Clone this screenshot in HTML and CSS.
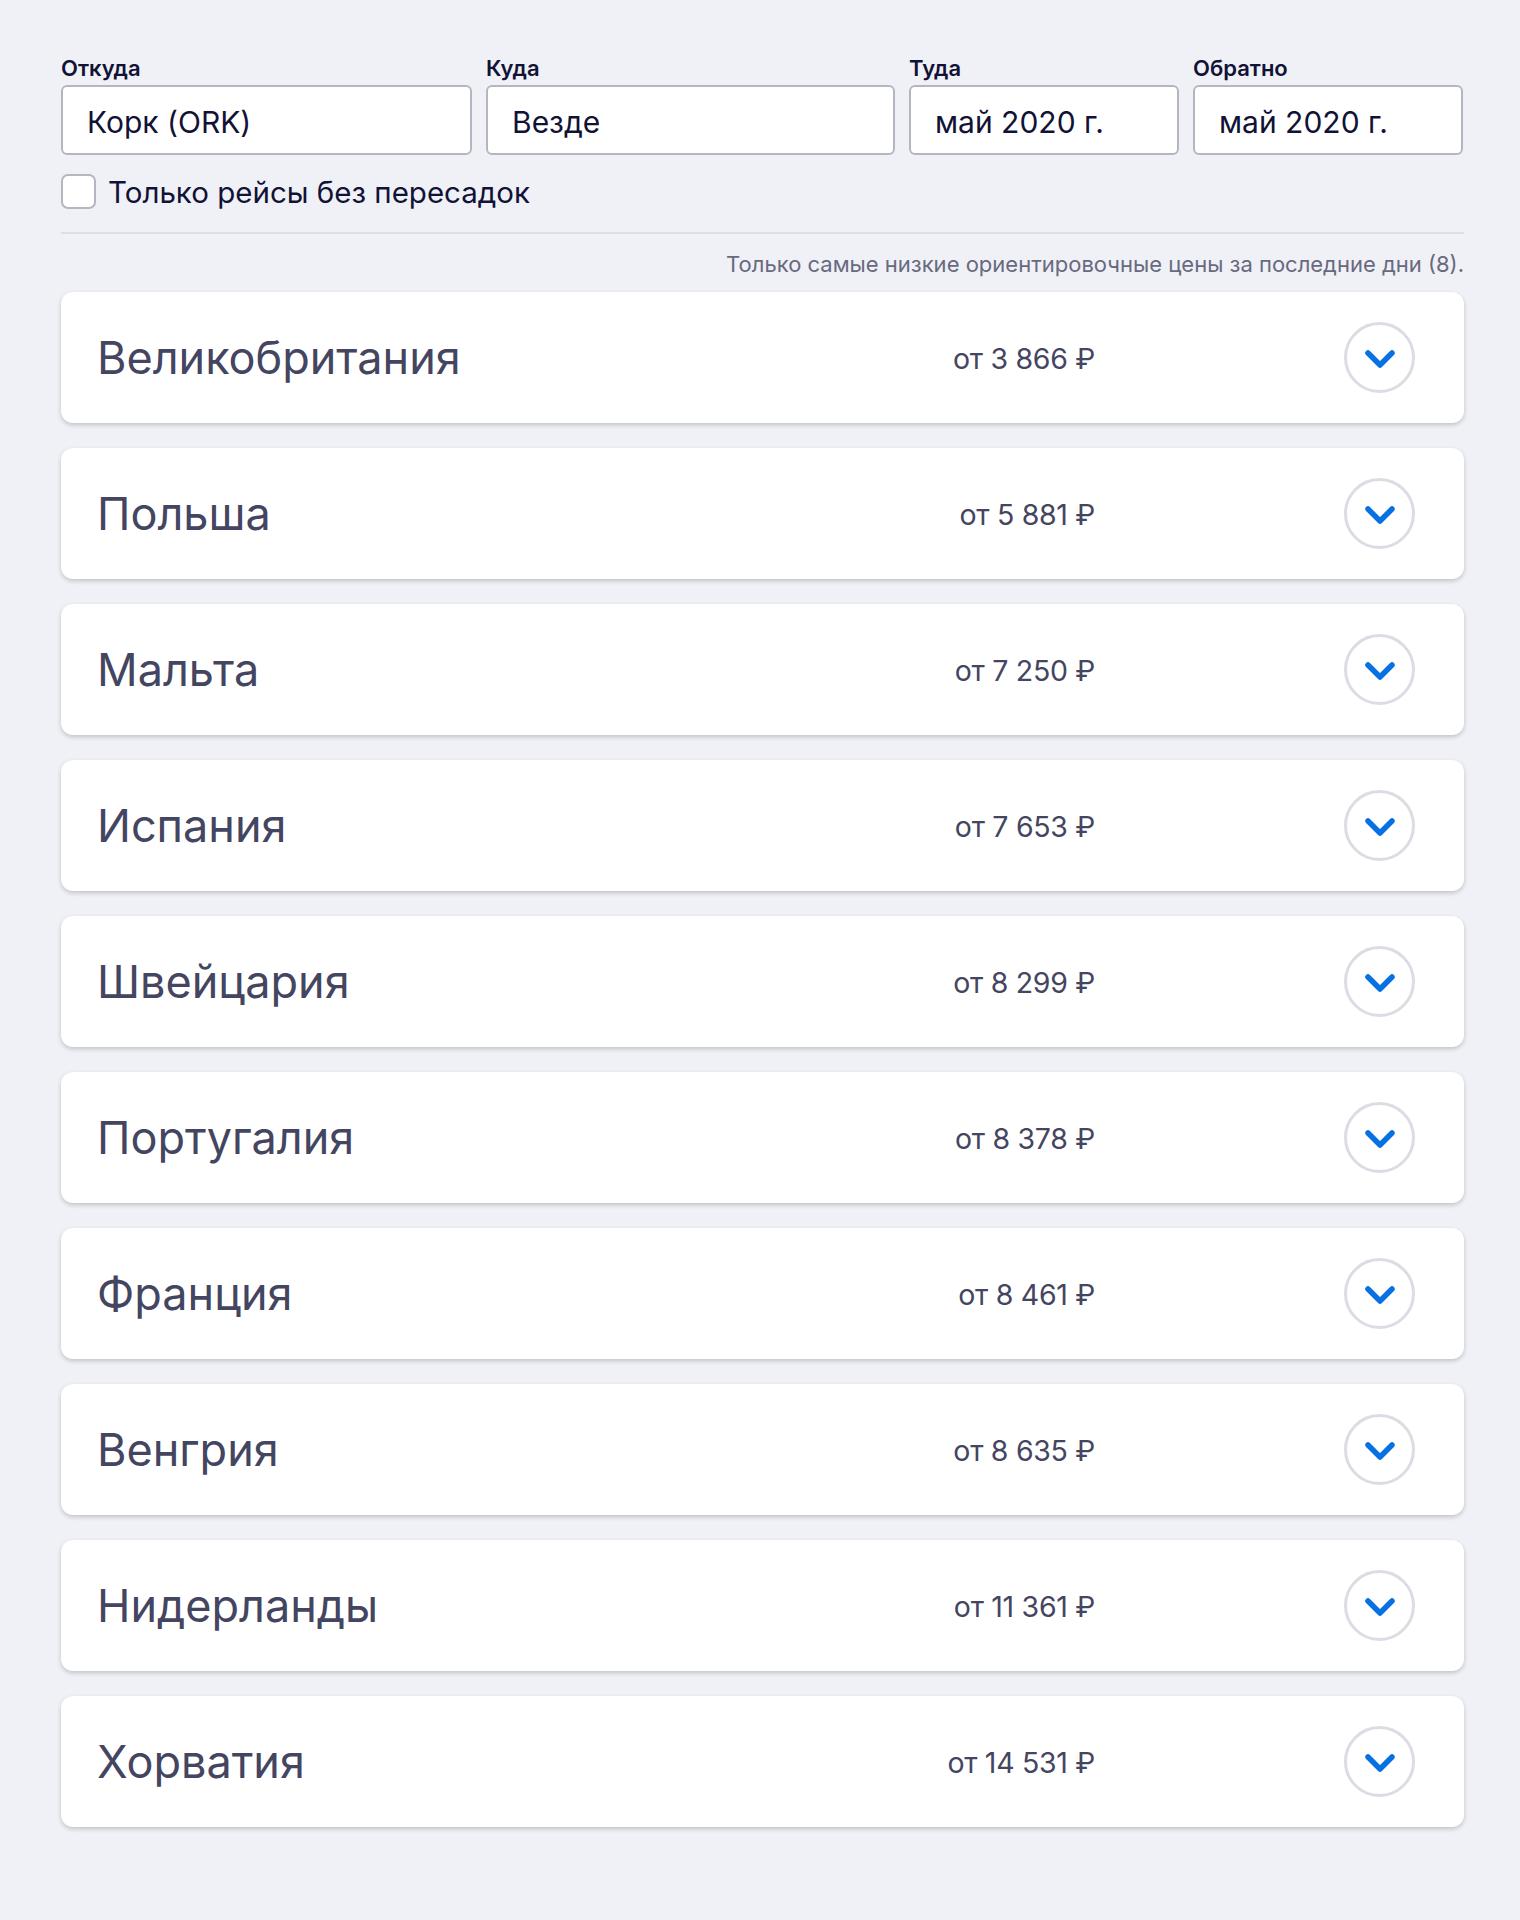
FILE: index.html
```html
<!DOCTYPE html>
<html lang="ru">
<head>
<meta charset="utf-8">
<title>Везде</title>
<link rel="stylesheet" href="styles.css">
</head>
<body>
<div class="page">
  <form class="search">
    <div class="fields">
      <div class="field">
        <label class="field-label">Откуда</label>
        <div class="field-input">Корк (ORK)</div>
      </div>
      <div class="field">
        <label class="field-label">Куда</label>
        <div class="field-input">Везде</div>
      </div>
      <div class="field">
        <label class="field-label">Туда</label>
        <div class="field-input">май 2020 г.</div>
      </div>
      <div class="field">
        <label class="field-label">Обратно</label>
        <div class="field-input">май 2020 г.</div>
      </div>
    </div>
    <label class="direct">
      <span class="checkbox"></span>
      <span class="direct-text">Только рейсы без пересадок</span>
    </label>
  </form>
  <div class="divider"></div>
  <p class="hint">Только самые низкие ориентировочные цены за последние дни (8).</p>
  <ul class="results">
    <li class="card"><span class="country">Великобритания</span><span class="price">от 3 866 ₽</span><span class="toggle"><svg viewBox="0 0 30 18" width="30" height="18"><path d="M3 3 L15 15 L27 3" fill="none" stroke="#0770e3" stroke-width="5.5" stroke-linecap="round" stroke-linejoin="round"/></svg></span></li>
    <li class="card"><span class="country">Польша</span><span class="price">от 5 881 ₽</span><span class="toggle"><svg viewBox="0 0 30 18" width="30" height="18"><path d="M3 3 L15 15 L27 3" fill="none" stroke="#0770e3" stroke-width="5.5" stroke-linecap="round" stroke-linejoin="round"/></svg></span></li>
    <li class="card"><span class="country">Мальта</span><span class="price">от 7 250 ₽</span><span class="toggle"><svg viewBox="0 0 30 18" width="30" height="18"><path d="M3 3 L15 15 L27 3" fill="none" stroke="#0770e3" stroke-width="5.5" stroke-linecap="round" stroke-linejoin="round"/></svg></span></li>
    <li class="card"><span class="country">Испания</span><span class="price">от 7 653 ₽</span><span class="toggle"><svg viewBox="0 0 30 18" width="30" height="18"><path d="M3 3 L15 15 L27 3" fill="none" stroke="#0770e3" stroke-width="5.5" stroke-linecap="round" stroke-linejoin="round"/></svg></span></li>
    <li class="card"><span class="country">Швейцария</span><span class="price">от 8 299 ₽</span><span class="toggle"><svg viewBox="0 0 30 18" width="30" height="18"><path d="M3 3 L15 15 L27 3" fill="none" stroke="#0770e3" stroke-width="5.5" stroke-linecap="round" stroke-linejoin="round"/></svg></span></li>
    <li class="card"><span class="country">Португалия</span><span class="price">от 8 378 ₽</span><span class="toggle"><svg viewBox="0 0 30 18" width="30" height="18"><path d="M3 3 L15 15 L27 3" fill="none" stroke="#0770e3" stroke-width="5.5" stroke-linecap="round" stroke-linejoin="round"/></svg></span></li>
    <li class="card"><span class="country">Франция</span><span class="price">от 8 461 ₽</span><span class="toggle"><svg viewBox="0 0 30 18" width="30" height="18"><path d="M3 3 L15 15 L27 3" fill="none" stroke="#0770e3" stroke-width="5.5" stroke-linecap="round" stroke-linejoin="round"/></svg></span></li>
    <li class="card"><span class="country">Венгрия</span><span class="price">от 8 635 ₽</span><span class="toggle"><svg viewBox="0 0 30 18" width="30" height="18"><path d="M3 3 L15 15 L27 3" fill="none" stroke="#0770e3" stroke-width="5.5" stroke-linecap="round" stroke-linejoin="round"/></svg></span></li>
    <li class="card"><span class="country">Нидерланды</span><span class="price">от 11 361 ₽</span><span class="toggle"><svg viewBox="0 0 30 18" width="30" height="18"><path d="M3 3 L15 15 L27 3" fill="none" stroke="#0770e3" stroke-width="5.5" stroke-linecap="round" stroke-linejoin="round"/></svg></span></li>
    <li class="card"><span class="country">Хорватия</span><span class="price">от 14 531 ₽</span><span class="toggle"><svg viewBox="0 0 30 18" width="30" height="18"><path d="M3 3 L15 15 L27 3" fill="none" stroke="#0770e3" stroke-width="5.5" stroke-linecap="round" stroke-linejoin="round"/></svg></span></li>
  </ul>
</div>
</body>
</html>
```

FILE: styles.css
```css
* { box-sizing: border-box; }
html, body {
  margin: 0;
  padding: 0;
  background: #eff1f6;
}
body {
  font-family: Inter, "Noto Sans", "DejaVu Sans", sans-serif;
  color: #111236;
}
.page {
  width: 1403px;
  margin-left: 61px;
  padding-top: 55px;
  padding-bottom: 80px;
}
.fields {
  display: grid;
  grid-template-columns: 411px 409px 270px 270px;
  column-gap: 14px;
}
.field-label {
  display: block;
  font-size: 22px;
  font-weight: 600;
  line-height: 26px;
  height: 30px;
  color: #111236;
}
.field-input {
  height: 70px;
  border: 2px solid #b6b6c3;
  border-radius: 6px;
  background: #fff;
  display: flex;
  align-items: center;
  padding: 4px 0 0 24px;
  font-size: 30px;
  color: #111236;
}
.direct {
  display: flex;
  align-items: center;
  gap: 12px;
  margin-top: 19px;
  height: 35px;
}
.checkbox {
  width: 35px;
  height: 35px;
  border: 2px solid #b6b6c3;
  border-radius: 7px;
  background: #fff;
}
.direct-text {
  font-size: 29.5px;
  color: #111236;
}
.divider {
  height: 2px;
  background: #dddee6;
  margin-top: 23px;
}
.hint {
  margin: 16px 0 0;
  text-align: right;
  font-size: 22px;
  line-height: 28px;
  color: #68697f;
}
.results {
  list-style: none;
  margin: 14px 0 0;
  padding: 0;
  display: flex;
  flex-direction: column;
  gap: 25px;
}
.card {
  height: 131px;
  background: #fff;
  border-radius: 12px;
  box-shadow: 0 2px 4px rgba(37, 32, 31, 0.22);
  display: flex;
  align-items: center;
  padding: 0 49px 0 36px;
}
.country {
  flex: 1;
  font-size: 45px;
  color: #444560;
}
.price {
  font-size: 28.5px;
  letter-spacing: -0.3px;
  color: #444560;
  text-align: right;
  margin-right: 249px;
  padding-top: 2px;
}
.toggle {
  width: 71px;
  height: 71px;
  border: 3px solid #dcdce4;
  border-radius: 50%;
  display: flex;
  align-items: center;
  justify-content: center;
  padding-top: 3px;
}
```
